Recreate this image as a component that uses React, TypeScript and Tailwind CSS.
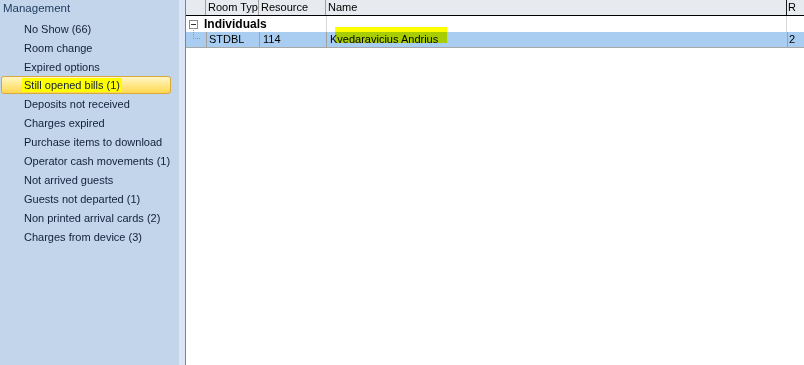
import React from "react";

const items = [
  "No Show (66)",
  "Room change",
  "Expired options",
  "Still opened bills (1)",
  "Deposits not received",
  "Charges expired",
  "Purchase items to download",
  "Operator cash movements (1)",
  "Not arrived guests",
  "Guests not departed (1)",
  "Non printed arrival cards (2)",
  "Charges from device (3)",
];

export default function App() {
  return (
    <div
      className="flex h-[365px] w-[804px] overflow-hidden bg-white text-[11px] text-black"
      style={{ fontFamily: "'Liberation Sans', Arial, sans-serif" }}
    >
      {/* left panel */}
      <div className="flex w-[179px] shrink-0 flex-col bg-[#c2d5ea]">
        <div className="h-[16px] whitespace-nowrap pl-[3px] pt-[1px] text-[11.5px] leading-[14px] text-[#1e3a5f]">Management</div>
        <div className="flex flex-col pt-[3px]">
          {items.map((t, i) =>
            i === 3 ? (
              <div
                key={t}
                className="mx-[1px] flex h-[18px] w-[170px] items-center rounded-[3px] border border-[#d9a83a] bg-gradient-to-b from-[#fff6c6] via-[#ffe888] to-[#ffd64c] pl-[20px]"
              >
                <span className="whitespace-nowrap bg-[#ffff00] px-[2px] leading-[14px] text-[#10203a]">{t}</span>
              </div>
            ) : (
              <div key={t} className="flex h-[19px] items-center whitespace-nowrap pl-[24px] leading-[14px] text-[#10203a]">
                {t}
              </div>
            )
          )}
        </div>
      </div>
      <div className="w-[6px] shrink-0 bg-[#dae6f5]" />
      <div className="w-[1px] shrink-0 bg-[#6a87ad]" />
      {/* grid */}
      <div className="relative flex flex-1 flex-col">
        {/* header */}
        <div className="flex h-[16px] whitespace-nowrap border-b border-black bg-[#e7eaee] leading-[15px]">
          <div className="w-[20px] border-r border-[#a0a0a0]" />
          <div className="w-[53px] overflow-hidden border-r border-[#a0a0a0] pl-[2px]">Room Typ</div>
          <div className="w-[67px] border-r border-[#a0a0a0] pl-[2px]">Resource</div>
          <div className="w-[461px] border-r border-[#1a1a1a] pl-[2px]">Name</div>
          <div className="flex-1 pl-[1px]">R</div>
        </div>
        {/* group row */}
        <div className="flex h-[16px] items-center whitespace-nowrap leading-[15px]">
          <div className="flex w-[140px] items-center gap-[6px] pl-[3px]">
            <div className="flex h-[9px] w-[9px] items-center justify-center border border-[#8a8a8a] bg-white">
              <div className="h-[1px] w-[5px] bg-[#333]" />
            </div>
            <span className="text-[12px] font-bold">Individuals</span>
          </div>
          <div className="h-full w-[461px] border-l border-r border-[#d8d8d8]" />
        </div>
        {/* data row */}
        <div className="flex h-[16px] whitespace-nowrap border-b border-[#a8a8a8] bg-[#a8cdf0] leading-[15px]">
          <div className="relative w-[20px]">
            <div className="absolute left-[7px] top-[-4px] h-[11px] w-[7px] border-b border-l border-dotted border-[#8a9aaa]" />
          </div>
          <div className="w-[54px] border-l border-r border-[#a0a0a0] pl-[2px]">STDBL</div>
          <div className="w-[67px] border-r border-[#a0a0a0] pl-[3px]">114</div>
          <div className="w-[461px] border-r border-[#a0a0a0] pl-[3px]">Kvedaravicius Andrius</div>
          <div className="flex-1 pl-[1px]">2</div>
        </div>
        {/* marker highlight */}
        <div className="pointer-events-none absolute left-[149px] top-[27px] h-[16px] w-[112px] bg-[#ffff00] mix-blend-multiply" />
      </div>
    </div>
  );
}
